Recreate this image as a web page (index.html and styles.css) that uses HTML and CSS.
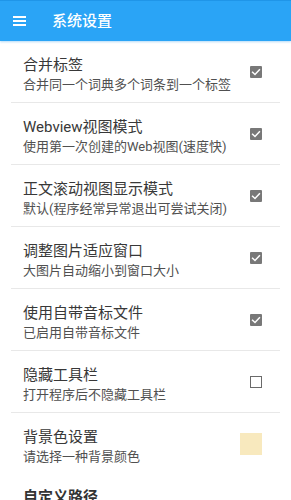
FILE: index.html
```html
<!DOCTYPE html>
<html lang="zh">
<head>
<meta charset="utf-8">
<link rel="stylesheet" href="styles.css">
</head>
<body>
<div class="app">
  <header class="bar">
    <div class="menu"><span></span><span></span><span></span></div>
    <div class="bar-title">系统设置</div>
  </header>
  <div class="list">
    <div class="row">
      <div class="text"><div class="t">合并标签</div><div class="s">合并同一个词典多个词条到一个标签</div></div>
      <div class="ctl"><span class="cb on"><svg viewBox="0 0 12 12"><path d="M2.6 6.2 L5 8.5 L9.4 3.8" /></svg></span></div>
    </div>
    <div class="row">
      <div class="text"><div class="t">Webview视图模式</div><div class="s">使用第一次创建的Web视图(速度快)</div></div>
      <div class="ctl"><span class="cb on"><svg viewBox="0 0 12 12"><path d="M2.6 6.2 L5 8.5 L9.4 3.8" /></svg></span></div>
    </div>
    <div class="row">
      <div class="text"><div class="t">正文滚动视图显示模式</div><div class="s">默认(程序经常异常退出可尝试关闭)</div></div>
      <div class="ctl"><span class="cb on"><svg viewBox="0 0 12 12"><path d="M2.6 6.2 L5 8.5 L9.4 3.8" /></svg></span></div>
    </div>
    <div class="row">
      <div class="text"><div class="t">调整图片适应窗口</div><div class="s">大图片自动缩小到窗口大小</div></div>
      <div class="ctl"><span class="cb on"><svg viewBox="0 0 12 12"><path d="M2.6 6.2 L5 8.5 L9.4 3.8" /></svg></span></div>
    </div>
    <div class="row">
      <div class="text"><div class="t">使用自带音标文件</div><div class="s">已启用自带音标文件</div></div>
      <div class="ctl"><span class="cb on"><svg viewBox="0 0 12 12"><path d="M2.6 6.2 L5 8.5 L9.4 3.8" /></svg></span></div>
    </div>
    <div class="row">
      <div class="text"><div class="t">隐藏工具栏</div><div class="s">打开程序后不隐藏工具栏</div></div>
      <div class="ctl"><span class="cb off"></span></div>
    </div>
    <div class="row last">
      <div class="text"><div class="t">背景色设置</div><div class="s">请选择一种背景颜色</div></div>
      <div class="ctl"><span class="swatch"></span></div>
    </div>
    <div class="cat">自定义路径</div>
  </div>
</div>
</body>
</html>
```

FILE: styles.css
```css
html, body {
  margin: 0;
  padding: 0;
  background: #ffffff;
}
body {
  font-family: "Roboto", "Noto Sans CJK SC", sans-serif;
  overflow: hidden;
}
.app {
  width: 291px;
  height: 500px;
  overflow: hidden;
}
.bar {
  height: 41px;
  background: #2aa4f6;
  border-top: 1px solid #1f95e8;
  box-sizing: border-box;
  display: flex;
  align-items: center;
  box-shadow: 0 1px 2px rgba(40, 150, 230, 0.35);
  position: relative;
  z-index: 1;
}
.menu {
  width: 13px;
  margin-left: 13px;
  display: flex;
  flex-direction: column;
  gap: 2px;
}
.menu span {
  display: block;
  height: 2px;
  background: #ffffff;
}
.bar-title {
  margin-left: 26px;
  color: #ffffff;
  font-size: 15px;
  font-weight: 500;
  line-height: 20px;
}
.list {
  display: flex;
  flex-direction: column;
}
.row {
  height: 61px;
  margin: 0 11px;
  border-bottom: 1px solid #e8e8e8;
  display: flex;
}
.row.last {
  border-bottom: none;
}
.text {
  flex: 1;
  padding-top: 14px;
  padding-left: 12px;
}
.t {
  font-size: 15px;
  line-height: 20px;
  color: #383838;
}
.s {
  font-size: 13px;
  line-height: 20px;
  color: #505050;
}
.ctl {
  align-self: center;
  display: flex;
  justify-content: flex-end;
  padding-right: 18px;
}
.cb {
  width: 12px;
  height: 12px;
  box-sizing: border-box;
  display: block;
}
.cb.on {
  background: #787878;
  border-radius: 1px;
}
.cb.on svg {
  display: block;
  width: 12px;
  height: 12px;
}
.cb.on path {
  fill: none;
  stroke: #ffffff;
  stroke-width: 1.5;
  stroke-linecap: square;
}
.cb.off {
  border: 1.5px solid #6a6a6a;
  background: #ffffff;
}
.swatch {
  display: block;
  width: 22px;
  height: 22px;
  background: #f8e9be;
}
.cat {
  margin-left: 23px;
  padding-top: 13px;
  font-size: 15px;
  line-height: 20px;
  font-weight: 700;
  color: #333333;
}
```
